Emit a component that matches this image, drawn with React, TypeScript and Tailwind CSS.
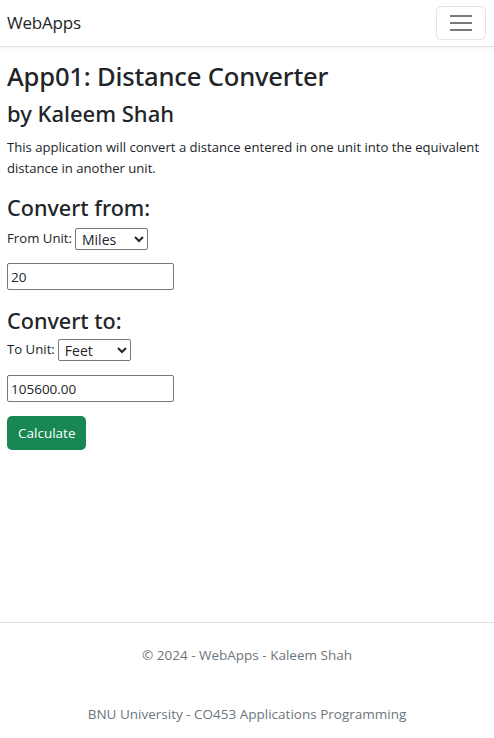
import { useState } from "react";

const FACTORS: Record<string, number> = {
  Miles: 5280,
  Feet: 1,
  Metres: 3.28084,
};

const headingFont = { fontFamily: '"Noto Sans", "Open Sans", sans-serif' };

export default function App() {
  const [fromUnit, setFromUnit] = useState("Miles");
  const [toUnit, setToUnit] = useState("Feet");
  const [value, setValue] = useState("20");
  const [result, setResult] = useState("105600.00");

  function calculate() {
    const n = parseFloat(value);
    if (isNaN(n)) return;
    setResult(((n * FACTORS[fromUnit]) / FACTORS[toUnit]).toFixed(2));
  }

  return (
    <div
      className="min-h-[738px] bg-white text-[#212529] flex flex-col"
      style={{ fontFamily: '"Open Sans", "Noto Sans", sans-serif' }}
    >
      <nav className="h-[47px] border-b border-[#dee2e6] shadow-[0_1px_6px_rgba(0,0,0,0.06)] flex items-center justify-between pl-[7px] pr-[8px]">
        <span className="text-[17px] text-[#212529] tracking-[-0.2px]">WebApps</span>
        <button className="w-[50px] h-[34px] rounded-[5px] border border-[#e3e3e3] flex flex-col items-center justify-center gap-[5px]">
          <span className="block w-[22px] h-[2px] bg-[#7b7b7b]" />
          <span className="block w-[22px] h-[2px] bg-[#7b7b7b]" />
          <span className="block w-[22px] h-[2px] bg-[#7b7b7b]" />
        </button>
      </nav>

      <main className="px-[7px] pt-[14px] flex-1">
        <h1 style={headingFont} className="text-[25.6px] leading-[32px] font-medium tracking-[-0.2px]">
          App01: Distance Converter
        </h1>
        <h2 style={headingFont} className="text-[22px] leading-[28px] font-medium mt-[6px]">
          by Kaleem Shah
        </h2>
        <p className="text-[13.1px] leading-[21px] mt-[10px]">
          This application will convert a distance entered in one unit into the equivalent distance in another unit.
        </p>

        <h3 style={headingFont} className="text-[21.6px] leading-[25px] font-medium mt-[16px]">
          Convert from:
        </h3>
        <div className="flex items-center mt-[8px] text-[13.2px]">
          <label>From Unit:</label>
          <select
            value={fromUnit}
            onChange={(e) => setFromUnit(e.target.value)}
            className="ml-[3px] w-[73px] h-[22px] border border-[#767676] rounded-[2px] text-[14px] pl-[2px] bg-white"
          >
            <option>Miles</option>
            <option>Feet</option>
            <option>Metres</option>
          </select>
        </div>
        <input
          value={value}
          onChange={(e) => setValue(e.target.value)}
          className="block mt-[13px] w-[167px] h-[27px] border border-[#767676] rounded-[2px] px-[3px] text-[13.5px]"
        />

        <h3 style={headingFont} className="text-[21.6px] leading-[25px] font-medium mt-[18px]">
          Convert to:
        </h3>
        <div className="flex items-center mt-[6px] text-[13.2px]">
          <label>To Unit:</label>
          <select
            value={toUnit}
            onChange={(e) => setToUnit(e.target.value)}
            className="ml-[3px] w-[73px] h-[22px] border border-[#767676] rounded-[2px] text-[14px] pl-[2px] bg-white"
          >
            <option>Feet</option>
            <option>Miles</option>
            <option>Metres</option>
          </select>
        </div>
        <input
          value={result}
          readOnly
          className="block mt-[14px] w-[167px] h-[27px] border border-[#767676] rounded-[2px] px-[3px] text-[13.5px]"
        />

        <button
          onClick={calculate}
          className="mt-[14px] h-[34px] px-[11px] rounded-[5px] bg-[#198754] text-white text-[13.5px]"
        >
          Calculate
        </button>
      </main>

      <footer className="border-t border-[#dee2e6] h-[116px] text-[13.5px] text-[#6c757d] flex flex-col items-center">
        <p className="mt-[22px]">© 2024 - WebApps - Kaleem Shah</p>
        <p className="mt-[39px]">BNU University - CO453 Applications Programming</p>
      </footer>
    </div>
  );
}
